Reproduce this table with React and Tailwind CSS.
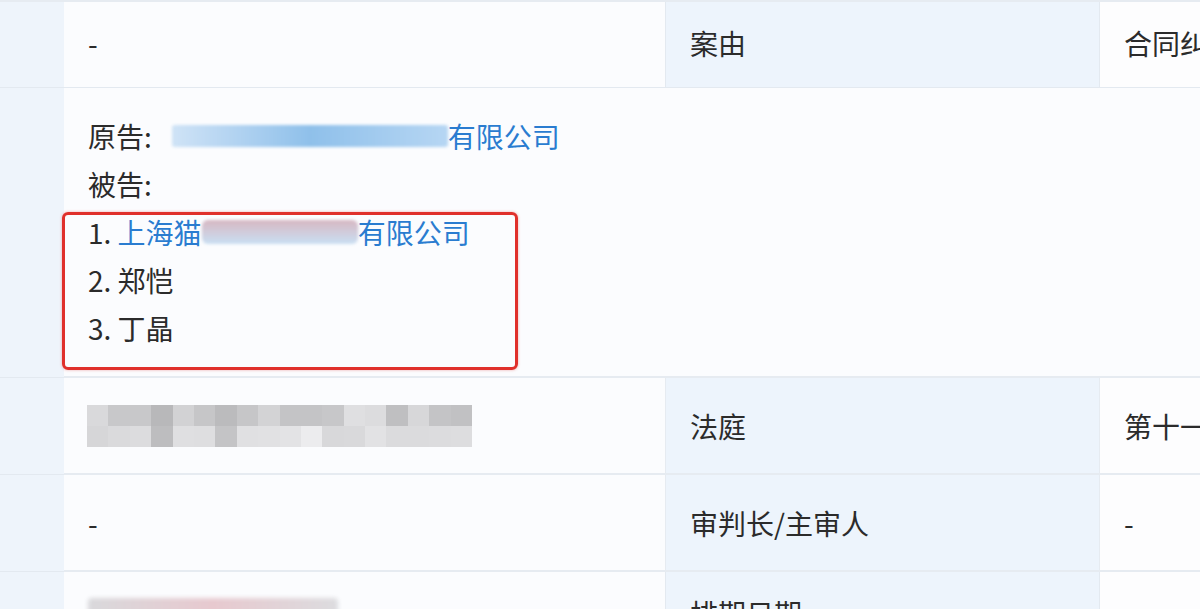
import React from 'react';

const mosaicTop = [
  'bg-[#d9d9db]', 'bg-[#c8c8ca]', 'bg-[#c8c8ca]', 'bg-[#b8b8ba]', 'bg-[#d2d2d4]', 'bg-[#c6c6c8]',
  'bg-[#bbbbbd]', 'bg-[#c6c6c8]', 'bg-[#d3d3d5]', 'bg-[#c4c4c6]', 'bg-[#c4c4c6]', 'bg-[#c7c7c9]',
  'bg-[#dfdfe1]', 'bg-[#dcdcde]', 'bg-[#bfbfc1]', 'bg-[#d7d7d9]', 'bg-[#c4c4c6]', 'bg-[#c1c1c3]',
];
const mosaicBottom = [
  'bg-[#d6d6d8]', 'bg-[#dadadc]', 'bg-[#dcdcde]', 'bg-[#bdbdbf]', 'bg-[#dfdfe1]', 'bg-[#dedee0]',
  'bg-[#c4c4c6]', 'bg-[#e0e0e2]', 'bg-[#e1e1e3]', 'bg-[#e3e3e5]', 'bg-[#ececee]', 'bg-[#d8d8da]',
  'bg-[#d9d9db]', 'bg-[#e2e2e4]', 'bg-[#dbdbdd]', 'bg-[#dbdbdd]', 'bg-[#dcdcde]', 'bg-[#dddddf]',
];

function Mosaic() {
  return (
    <div className="grid grid-cols-18 w-[385px] h-[42px] blur-[0.6px]">
      {mosaicTop.map((c, i) => <div key={'t' + i} className={c} />)}
      {mosaicBottom.map((c, i) => <div key={'b' + i} className={c} />)}
    </div>
  );
}

function Side() {
  return <div className="bg-[#eef4fb] border-b border-[#e3e9f0]" />;
}

export default function App() {
  return (
    <div
      className="w-[1200px] h-[609px] overflow-hidden bg-[#fbfcfe] text-[28px] text-[#2b2b2b]"
      style={{ fontFamily: '"Noto Sans CJK SC", "Noto Sans", sans-serif' }}
    >
      <div className="grid grid-cols-[64px_601px_435px_1fr] border-t-2 border-[#e6ebf1]">
        {/* 第一行 */}
        <Side />
        <div className="h-[86px] flex items-center pb-[4px] pl-[24px] border-b border-[#e3e9f0]">-</div>
        <div className="flex items-center pb-[4px] pl-[24px] bg-[#edf4fc] border-b border-l border-r border-[#e3e9f0]">案由</div>
        <div className="flex items-center pb-[4px] pl-[24px] whitespace-nowrap bg-[#fdfdfe] border-b border-[#e3e9f0]">合同纠纷</div>

        {/* 当事人 */}
        <Side />
        <div className="col-span-3 relative h-[290px] py-[24px] pl-[24px] leading-[48px] border-b-2 border-[#e6ebf1]">
          <div className="flex items-center">
            <span>原告:</span>
            <span className="ml-[20px] w-[276px] h-[22px] rounded-[3px] bg-gradient-to-r from-[#cfe3f6] via-[#8fc0ea] to-[#b6d6f3] blur-[1.5px]" />
            <span className="text-[#2a7cd0]">有限公司</span>
          </div>
          <div>被告:</div>
          <div className="flex items-center">
            <span>1.&nbsp;</span>
            <span className="text-[#2a7cd0]">上海猫</span>
            <span className="w-[156px] h-[24px] rounded-[6px] bg-gradient-to-b from-[#d6b7c2] to-[#c8dff3] blur-[1.5px]" />
            <span className="text-[#2a7cd0]">有限公司</span>
          </div>
          <div>2. 郑恺</div>
          <div>3. 丁晶</div>
          <div className="absolute left-[-2px] top-[124px] w-[456px] h-[158px] border-[3px] border-[#e0302b] rounded-[6px] shadow-[0_0_3px_rgba(224,48,43,0.4)]" />
        </div>

        {/* 法庭 */}
        <Side />
        <div className="h-[97px] flex items-center pl-[23px] border-b-2 border-[#e6ebf1]">
          <Mosaic />
        </div>
        <div className="flex items-center pl-[24px] bg-[#edf4fc] border-b-2 border-l border-r border-[#e6ebf1]">法庭</div>
        <div className="flex items-center pl-[24px] whitespace-nowrap bg-[#fdfdfe] border-b-2 border-[#e6ebf1]">第十一法庭</div>

        {/* 审判长 */}
        <Side />
        <div className="h-[97px] flex items-center pl-[24px] border-b-2 border-[#e6ebf1]">-</div>
        <div className="flex items-center pl-[24px] bg-[#edf4fc] border-b-2 border-l border-r border-[#e6ebf1]">审判长/主审人</div>
        <div className="flex items-center pl-[24px] bg-[#fdfdfe] border-b-2 border-[#e6ebf1]">-</div>

        {/* 排期日期 */}
        <Side />
        <div className="h-[97px] pt-[26px] pl-[24px]">
          <span className="block w-[250px] h-[22px] rounded bg-gradient-to-r from-[#d9d9dc] via-[#e7c9cf] to-[#dcdcdf] blur-[2px]" />
        </div>
        <div className="pt-[20px] pl-[24px] bg-[#edf4fc] border-l border-r border-[#e3e9f0]">排期日期</div>
        <div className="bg-[#fdfdfe]" />
      </div>
    </div>
  );
}
